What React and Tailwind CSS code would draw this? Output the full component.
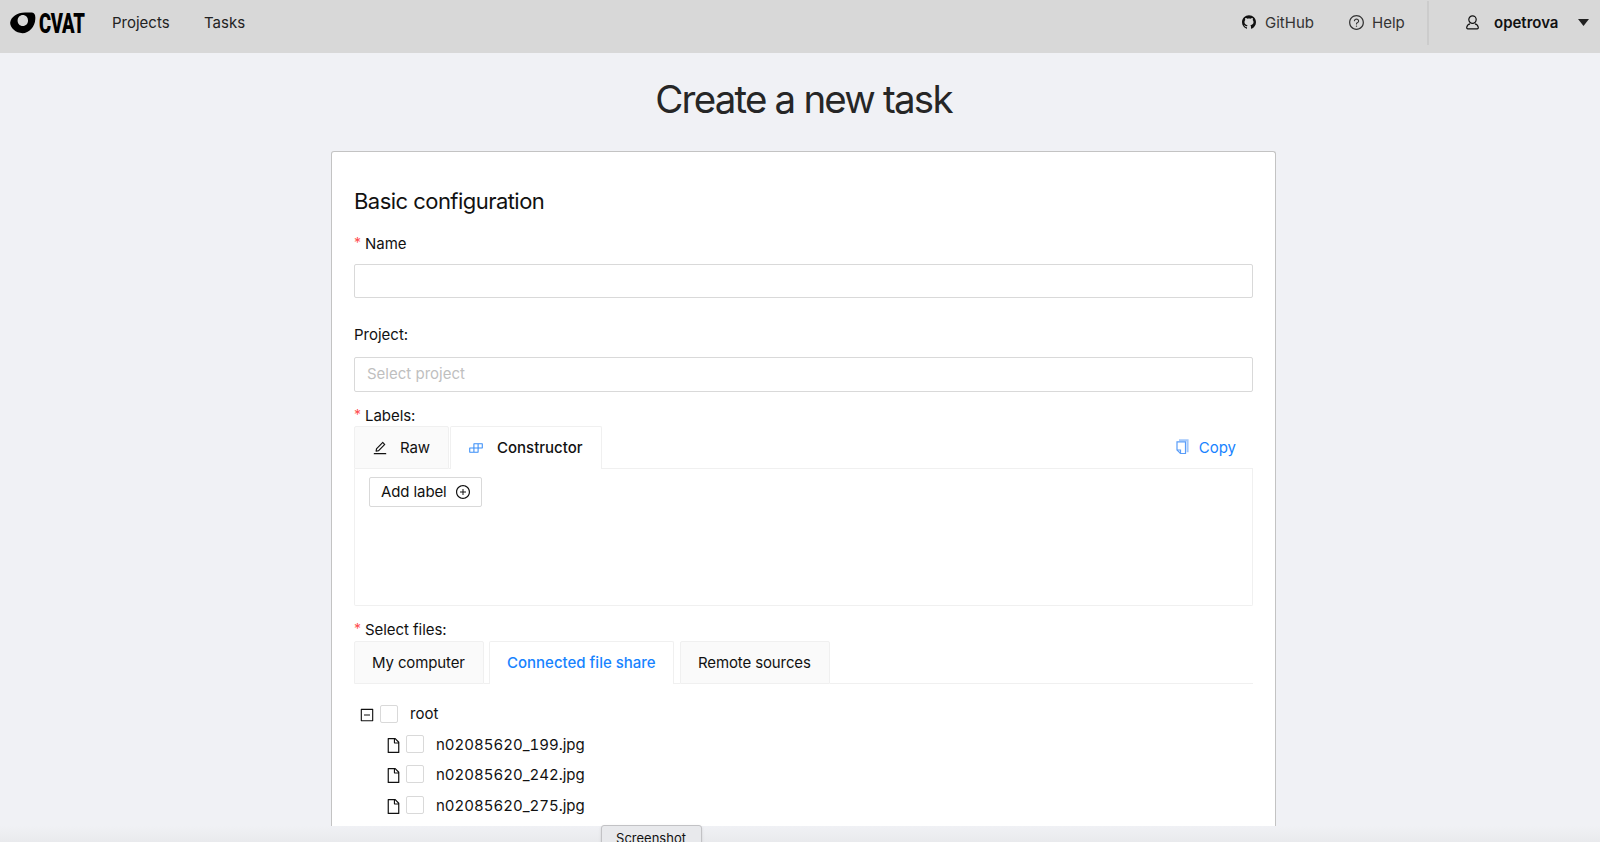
import React from "react";
import {
  AiOutlineGithub, AiOutlineQuestionCircle, AiOutlineEdit, AiOutlineBuild,
  AiOutlinePlusCircle, AiOutlineMinusSquare, AiOutlineFile,
} from "react-icons/ai";

function Logo() {
  return (
    <svg className="h-[22px] w-[26px]" viewBox="0 0 26 22">
      <path fillRule="evenodd" d="M0.200 10.500C1 5 7 0.8 15 0.6H22C24.500 0.800 25.600 3 25.300 7C25 15 19 21.200 12.500 21.200C5.500 21.200-0.300 15.500 0.200 10.500ZM13.800 3C10.500 2.400 7.600 4.900 7.600 8.500C7.600 12 10.200 14.200 13 14C16 13.800 18.200 11.600 18 8.300C17.900 5.500 16.200 3.500 13.800 3Z" />
    </svg>
  );
}

function UserIcon() {
  return (
    <svg className="h-[15px] w-[13px]" viewBox="0 0 13 15" fill="none" stroke="#111" strokeWidth="1.200">
      <circle cx="6.500" cy="4.600" r="3.700" />
      <path d="M4 8.800C1.800 9.300 0.900 10.800 0.700 12.500Q0.600 13.800 1.800 13.800H11.200Q12.400 13.800 12.300 12.500C12.100 10.800 11.200 9.300 9 8.800" />
    </svg>
  );
}

function CopyIcon() {
  return (
    <svg className="h-4 w-[13px]" viewBox="0 0 13 16" fill="none">
      <path d="M3 1.200h8.600v12" stroke="#a3c8fb" strokeWidth="2" />
      <path d="M1 2.800h8.500v11.700H4.500L1 11z" stroke="#5a9df8" strokeWidth="1.200" />
      <path d="M1 11h3.500v3.500" stroke="#5a9df8" strokeWidth="1.200" />
    </svg>
  );
}

function Required({ children }) {
  return (
    <div className="flex h-[22px] items-center text-[15px]">
      <span className="mr-[4px] text-sm text-[#ff4d4f]">*</span>
      <span className="pt-[2px] tracking-[-0.05px]">{children}</span>
    </div>
  );
}

function Checkbox() {
  return <span className="h-[18px] w-[18px] rounded-xs border border-[#d9d9d9] bg-white" />;
}

const files = ["n02085620_199.jpg", "n02085620_242.jpg", "n02085620_275.jpg"];

export default function App() {
  return (
    <div className="flex h-[842px] w-[1600px] flex-col overflow-hidden bg-[#f0f1f5] font-['Inter',sans-serif] text-[15px] text-[#111]">
      <header className="flex h-[53px] shrink-0 items-start bg-[#d8d8d8]">
        <div className="flex h-[45px] w-full items-center">
          <div className="flex w-[112px] items-center pl-[10px]">
            <Logo />
            <span className="ml-[3px] w-[46px] origin-left scale-x-[0.66] pt-[2px] text-[28px] leading-none font-black tracking-[-0.5px] font-['Roboto',sans-serif] text-black">CVAT</span>
          </div>
          <span className="w-[92px] pt-px text-[#222]">Projects</span>
          <span className="pt-px text-[#222]">Tasks</span>
          <div className="ml-auto flex items-center">
            <AiOutlineGithub className="-mt-px h-4 w-4" />
            <span className="ml-[8px] w-[83px] pt-px text-[#333]">GitHub</span>
            <AiOutlineQuestionCircle className="-mt-px h-[17px] w-[17px] text-[#333]" />
            <span className="ml-[7px] w-[55px] pt-px text-[#333]">Help</span>
            <span className="h-[44px] w-[2px] bg-[#cccccc]" />
            <span className="ml-[37px]"><UserIcon /></span>
            <span className="ml-[15px] w-[84px] pt-[2px] font-semibold">opetrova</span>
            <svg className="mr-[11px] h-[7px] w-[11px]" viewBox="0 0 11 7"><path d="M0 0h11L5.500 7z" fill="#222" /></svg>
          </div>
        </div>
      </header>
      <div className="flex h-[98px] shrink-0 items-center justify-center pb-[5px] pl-[7px] text-[38.500px] text-[#262626]">
        <h1 className="tracking-[-1.800px]">Create a new task</h1>
      </div>
      <main className="ml-[331px] flex h-[675px] w-[945px] shrink-0 flex-col rounded-t-[3px] border border-b-0 border-[#c3c3c3] bg-white px-[22px] pt-[33px]">
        <h2 className="h-8 text-[22px] leading-8 tracking-[-0.540px]">Basic configuration</h2>
        <div className="mt-[15px]"><Required>Name</Required></div>
        <div className="mt-[10px] h-[34px] rounded-xs border border-[#d9d9d9]" />
        <div className="mt-[26px] h-[21px] leading-[22px]">Project:</div>
        <div className="mt-[12px] flex h-[35px] items-center rounded-xs border border-[#d9d9d9] px-3 text-[#bfbfbf]">Select project</div>
        <div className="mt-[12px]"><Required>Labels:</Required></div>
        <div className="flex h-[43px] shrink-0">
          <div className="flex w-[95px] items-center rounded-t-xs border border-[#f0f0f0] bg-[#fafafa] pl-[17px]">
            <AiOutlineEdit className="h-4 w-4" />
            <span className="ml-[12px] pt-[2px] tracking-[-0.1px]">Raw</span>
          </div>
          <div className="w-px border-b border-[#f0f0f0]" />
          <div className="flex w-[152px] items-center rounded-t-xs border border-b-0 border-[#f0f0f0] pl-[17px]">
            <AiOutlineBuild className="h-4 w-4 text-[#3b8ff8]" />
            <span className="ml-[13px] pt-px font-medium">Constructor</span>
          </div>
          <div className="flex grow items-center justify-end border-b border-[#f0f0f0] pr-[17px] text-[#1783ff]">
            <CopyIcon />
            <span className="ml-[10px] pt-[2px]">Copy</span>
          </div>
        </div>
        <div className="h-[137px] shrink-0 rounded-b-xs border border-t-0 border-[#f0f0f0] pt-[8px] pl-[14px]">
          <div className="flex h-[30px] w-[113px] items-center rounded-xs border border-[#d9d9d9] pl-[11px]">
            <span className="whitespace-nowrap tracking-[-0.1px]">Add label</span>
            <AiOutlinePlusCircle className="-mt-px ml-[8px] h-[16px] w-[16px] shrink-0" />
          </div>
        </div>
        <div className="mt-[12px]"><Required>Select files:</Required></div>
        <div className="mt-px flex h-[43px] shrink-0">
          <div className="w-[130px] rounded-t-xs border border-[#f0f0f0] bg-[#fafafa] pl-[17px] leading-[42px] tracking-[-0.120px]">My computer</div>
          <div className="w-[5px] border-b border-[#f0f0f0]" />
          <div className="w-[185px] rounded-t-xs border border-b-0 border-[#f0f0f0] pl-[17px] leading-[42px] font-medium text-[#1783ff]">Connected file share</div>
          <div className="w-[6px] border-b border-[#f0f0f0]" />
          <div className="w-[150px] rounded-t-xs border border-[#f0f0f0] bg-[#fafafa] pl-[17px] leading-[42px] tracking-[-0.120px]">Remote sources</div>
          <div className="grow border-b border-[#f0f0f0]" />
        </div>
        <div className="mt-[15px] flex h-[30px] items-center pl-[5px]">
          <AiOutlineMinusSquare className="mt-[2px] h-4 w-4" />
          <span className="-mt-px ml-[5px] flex w-[30px]"><Checkbox /></span>
          <span>root</span>
        </div>
        {files.map((name) => (
          <div key={name} className="flex h-[30.500px] items-center pl-[31px]">
            <AiOutlineFile className="mt-[2px] h-[17px] w-[17px]" />
            <span className="-mt-px ml-[4px] flex w-[30px]"><Checkbox /></span>
            <span className="pt-px tabular-nums">{name}</span>
          </div>
        ))}
      </main>
      <footer className="flex h-4 shrink-0 bg-linear-to-b from-[#f0f1f5] to-[#e9eaed] pl-[601px]">
        <div className="-mt-px h-[30px] w-[101px] rounded-t-[3px] border border-[#c2c2c5] bg-[#e8e9ec] pt-[3px] pr-px text-center text-[13px] leading-[18px] shadow-sm">Screenshot</div>
      </footer>
    </div>
  );
}
